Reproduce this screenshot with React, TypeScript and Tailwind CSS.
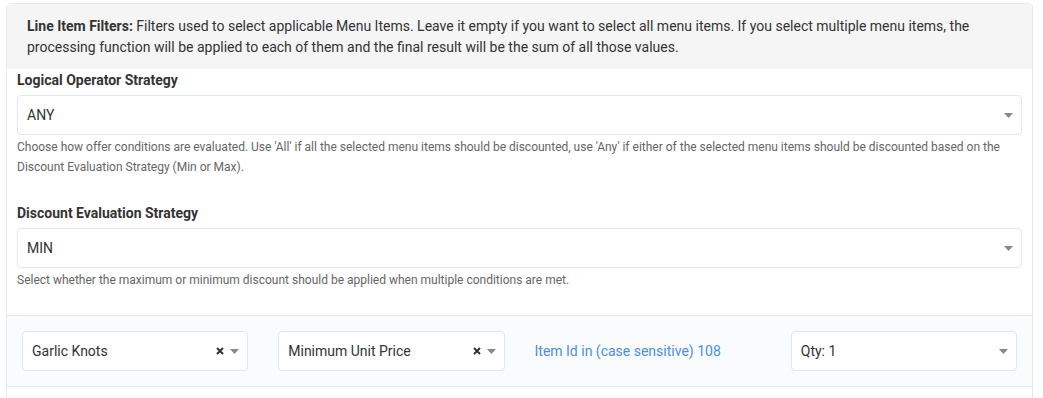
import React from "react";

function Caret() {
    return (
        <svg width="9" height="5" viewBox="0 0 9 5" className="shrink-0">
            <path d="M0 0 L9 0 L4.5 5 Z" fill="#888" />
        </svg>
    );
}

function Clear() {
    return (
        <svg width="8" height="8" viewBox="0 0 8 8" className="shrink-0">
            <path d="M1 1 L7 7 M7 1 L1 7" stroke="#333" strokeWidth="2" />
        </svg>
    );
}

function Select({ value, clearable = false, className = "" }: { value: string; clearable?: boolean; className?: string }) {
    return (
        <div className={`flex items-center h-10 bg-white border border-[#e1e7f0] rounded-[4px] pl-[9px] pr-[8px] ${className}`}>
            <span className="flex-1 text-[14px] text-[#333]">{value}</span>
            {clearable && <span className="mr-[6px] flex items-center"><Clear /></span>}
            <Caret />
        </div>
    );
}

function Field({ label, value, help, last = false }: { label: string; value: string; help: string; last?: boolean }) {
    return (
        <div className={last ? "mb-[25px]" : "mb-[26px]"}>
            <div className="text-[14px] font-bold text-[#333] leading-[20px] mb-[5px]">{label}</div>
            <Select value={value} />
            <p className="text-[12px] text-[#666] leading-[20px] mt-[2px]">{help}</p>
        </div>
    );
}

export default function App() {
    return (
        <div className="bg-white pl-[6px] pr-[10px] pt-[3px] h-[398px] font-['Roboto',sans-serif]">
            <div className="border border-[#e4eaf3] border-b-0 rounded-t-[5px] h-full">
                <div className="bg-[#f5f5f5] rounded-t-[4px] px-[20px] pt-[12px] pb-[11px] text-[14px] leading-[21px] text-[#333]">
                    <b className="font-bold">Line Item Filters:</b> Filters used to select applicable Menu Items. Leave it empty if you want to select all menu items. If you select multiple menu items, the processing function will be applied to each of them and the final result will be the sum of all those values.
                </div>
                <div className="px-[10px] pt-[1px]">
                    <Field
                        label="Logical Operator Strategy"
                        value="ANY"
                        help="Choose how offer conditions are evaluated. Use 'All' if all the selected menu items should be discounted, use 'Any' if either of the selected menu items should be discounted based on the Discount Evaluation Strategy (Min or Max)."
                    />
                    <Field
                        label="Discount Evaluation Strategy"
                        value="MIN"
                        help="Select whether the maximum or minimum discount should be applied when multiple conditions are met."
                        last
                    />
                </div>
                <div className="grid grid-cols-4 items-center bg-[#f9fbfd] border-y border-[#e4eaf3] py-[15px]">
                    <div className="px-[15px]"><Select value="Garlic Knots" clearable /></div>
                    <div className="px-[15px]"><Select value="Minimum Unit Price" clearable /></div>
                    <div className="px-[15px] text-[14px] text-[#4a8fdf]">Item Id in (case sensitive) 108</div>
                    <div className="px-[15px]"><Select value="Qty: 1" /></div>
                </div>
            </div>
        </div>
    );
}
